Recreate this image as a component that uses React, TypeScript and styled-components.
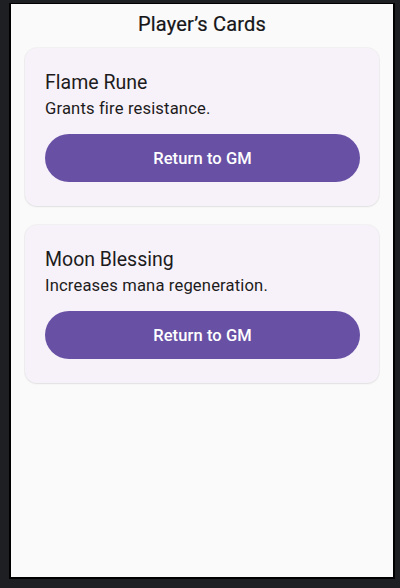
import styled, { createGlobalStyle } from 'styled-components';

const cards = [
  { name: 'Flame Rune', text: 'Grants fire resistance.' },
  { name: 'Moon Blessing', text: 'Increases mana regeneration.' },
];

const GlobalStyle = createGlobalStyle`
  html, body {
    margin: 0;
    padding: 0;
    background: #1e1f23;
  }

  body {
    font-family: Roboto, "Noto Sans", sans-serif;
  }
`;

const Stage = styled.div`
  width: 400px;
  height: 588px;
  padding: 3px 5px 0 9px;
  box-sizing: border-box;
`;

const Screen = styled.main`
  width: 386px;
  height: 576px;
  box-sizing: border-box;
  border: 2px solid #000;
  border-top-width: 1px;
  background: #fafafa;
  display: flex;
  flex-direction: column;
  align-items: center;
`;

const Title = styled.h1`
  margin: 0;
  padding-top: 6px;
  height: 44px;
  box-sizing: border-box;
  font-size: 20px;
  line-height: 28px;
  font-weight: 400;
  color: #151518;
  letter-spacing: 0.2px;
  -webkit-text-stroke: 0.2px #151518;
`;

const List = styled.div`
  width: 354px;
  display: flex;
  flex-direction: column;
  gap: 19px;
`;

const Card = styled.section`
  background: #f7f2fa;
  border-radius: 12px;
  box-shadow: 0 0 0 1px rgba(0, 0, 0, 0.035), 0 1px 2px rgba(0, 0, 0, 0.07);
  padding: 23px 19px 24px 20px;
  display: flex;
  flex-direction: column;
`;

const CardName = styled.h2`
  margin: 0;
  font-size: 19.5px;
  line-height: 24px;
  font-weight: 400;
  color: #1d1b20;
`;

const CardText = styled.p`
  margin: 2px 0 13px;
  font-size: 16.6px;
  line-height: 24px;
  color: #1d1b20;
  letter-spacing: 0.15px;
`;

const ReturnButton = styled.button`
  height: 48px;
  border: none;
  border-radius: 24px;
  background: #6851a5;
  color: #fff;
  font-family: inherit;
  font-size: 16.5px;
  font-weight: 500;
  letter-spacing: 0.1px;
  cursor: pointer;
`;

export default function App() {
  return (
    <>
      <GlobalStyle />
      <Stage>
        <Screen>
          <Title>Player’s Cards</Title>
          <List>
            {cards.map((card) => (
              <Card key={card.name}>
                <CardName>{card.name}</CardName>
                <CardText>{card.text}</CardText>
                <ReturnButton>Return to GM</ReturnButton>
              </Card>
            ))}
          </List>
        </Screen>
      </Stage>
    </>
  );
}
